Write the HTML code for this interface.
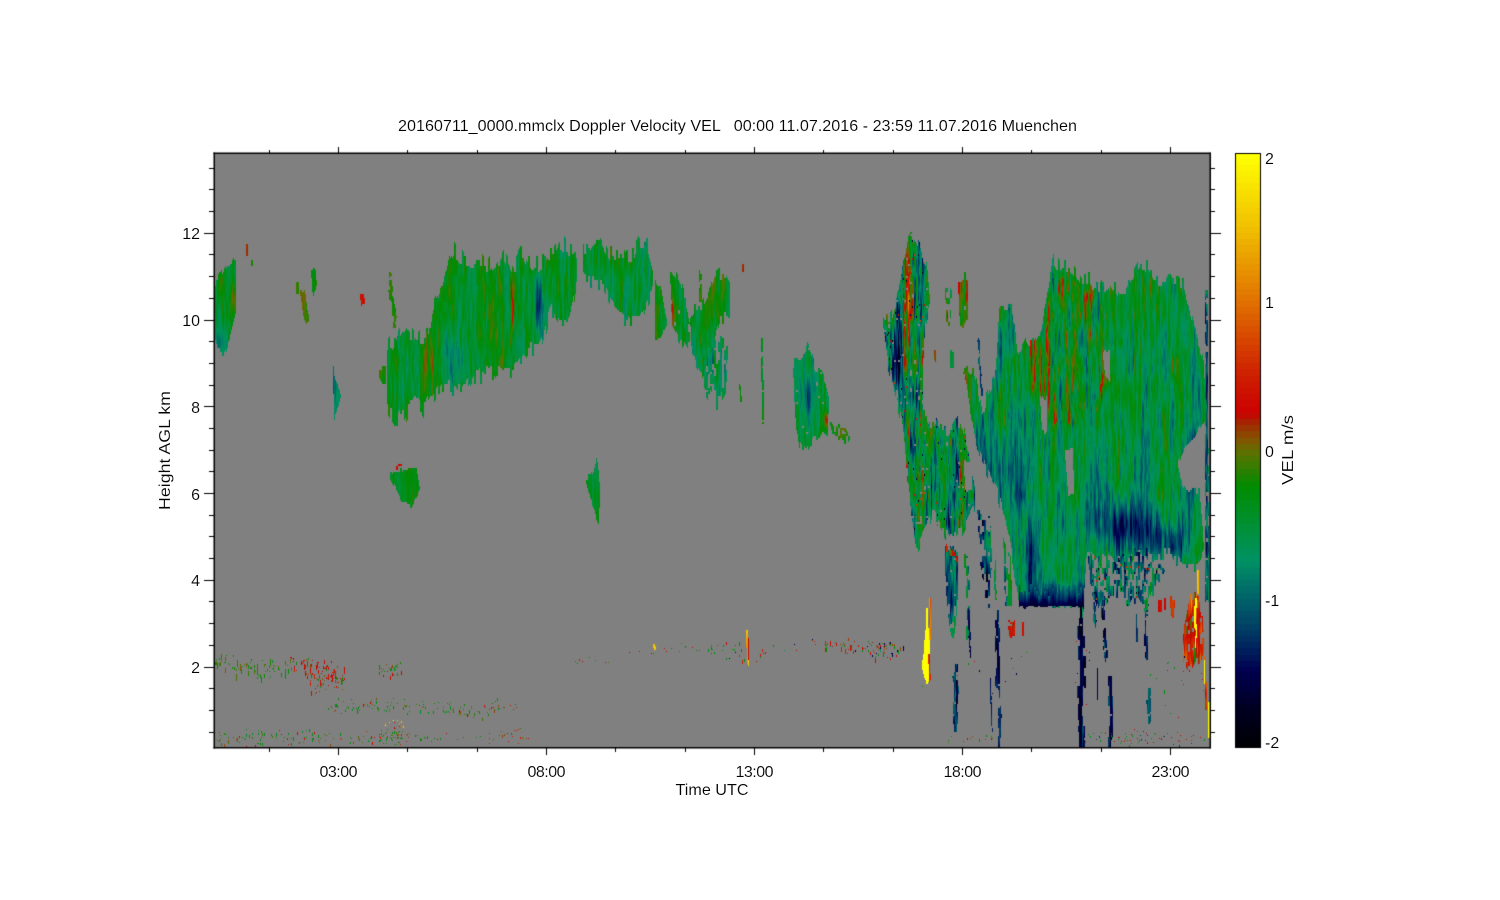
<!DOCTYPE html>
<html><head><meta charset="utf-8"><title>Doppler Velocity</title>
<style>
html,body{margin:0;padding:0;background:#fff;width:1500px;height:900px;overflow:hidden}
canvas,svg{position:absolute;left:0;top:0}
text{font-family:"Liberation Sans",sans-serif;font-size:16px;fill:#000;stroke:#fff;stroke-width:.12px}
</style></head><body>
<canvas id="c" width="1500" height="900"></canvas>
<svg width="1500" height="900" viewBox="0 0 1500 900">
<text x="398" y="131" textLength="679" lengthAdjust="spacingAndGlyphs" xml:space="preserve">20160711_0000.mmclx Doppler Velocity VEL   00:00 11.07.2016 - 23:59 11.07.2016 Muenchen</text>
<g text-anchor="end">
<text x="200" y="239">12</text><text x="200" y="326">10</text><text x="200" y="413">8</text><text x="200" y="500">6</text><text x="200" y="586">4</text><text x="200" y="673">2</text>
</g>
<g text-anchor="middle">
<text x="338.5" y="777" textLength="38">03:00</text><text x="546.5" y="777" textLength="38">08:00</text><text x="754.5" y="777" textLength="38">13:00</text><text x="962.5" y="777" textLength="38">18:00</text><text x="1170.5" y="777" textLength="38">23:00</text>
<text x="712" y="795" textLength="73" lengthAdjust="spacingAndGlyphs">Time UTC</text>
</g>
<text transform="translate(170,510) rotate(-90)" textLength="119" lengthAdjust="spacingAndGlyphs">Height AGL km</text>
<text transform="translate(1293,485) rotate(-90)" textLength="70" lengthAdjust="spacingAndGlyphs">VEL m/s</text>
<text x="1265" y="164">2</text><text x="1265" y="308">1</text><text x="1265" y="457">0</text><text x="1265" y="606">-1</text><text x="1265" y="748">-2</text>
</svg>
<script>
(function(){
var cv=document.getElementById('c'),g=cv.getContext('2d');
g.fillStyle='#fff';g.fillRect(0,0,1500,900);
var stops=[[-2,0,0,5],[-1.75,0,0,35],[-1.5,0,0,80],[-1.25,0,55,100],[-1,0,100,105],[-.75,0,145,100],[-.6,0,145,70],[-.25,0,140,0],[0,100,110,0],[.07,130,85,0],[.2,170,30,0],[.25,204,0,0],[.5,205,30,0],[.75,215,70,0],[1,224,112,0],[1.5,240,190,0],[2,255,255,0]];
function col(v){
  v=Math.max(-2,Math.min(2,v));
  v=Math.round((v+2)/4*95)/95*4-2;
  for(var i=1;i<stops.length;i++){if(v<=stops[i][0]){var a=stops[i-1],b=stops[i],t=(v-a[0])/(b[0]-a[0]);
    return 'rgb('+Math.round(a[1]+(b[1]-a[1])*t)+','+Math.round(a[2]+(b[2]-a[2])*t)+','+Math.round(a[3]+(b[3]-a[3])*t)+')';}}
  return '#ff0';
}
var s=12345;function R(){s=(s+0x6D2B79F5)|0;var t=Math.imul(s^(s>>>15),1|s);t=(t+Math.imul(t^(t>>>7),61|t))^t;return((t^(t>>>14))>>>0)/4294967296;}
function H(i,j,k){var h=Math.imul(i,374761393)+Math.imul(j,668265263)+Math.imul(k,1274126177);h=Math.imul(h^(h>>>13),1274126177);return((h^(h>>>16))>>>0)/4294967296;}
function vn(x,y,sx,sy,k){var i=Math.floor(x/sx),f=y/sy,j=Math.floor(f);f-=j;f=f*f*(3-2*f);return H(i,j,k)*(1-f)+H(i,j+1,k)*f;}
var G=[
[218,340,4,15,-.6],[233,300,3,15,.3],
[452,360,9,28,-.55],[538,305,4,26,-.85],[512,300,2,32,.55],[431,360,2,20,.5],[425,355,5,25,.15],[490,300,8,28,.2],[520,300,3,25,.1],
[808,400,3,28,-.9],[826,420,3,10,.7],
[710,290,8,25,.25],[672,310,2,20,.3],
[1032,560,10,45,-.75],[1120,525,38,24,-.8],[1060,595,28,12,-.6],[1170,540,22,18,-.55],[1190,470,6,45,-.7],[1012,470,20,60,-.45],[1135,480,10,40,-.3],[1095,490,8,30,-.3],
[1062,290,6,25,.45],[1047,345,4,50,.5],[1092,300,4,25,.4],[1105,335,3,40,.35],[1182,300,4,20,.3],[1105,378,5,12,.5],[1150,285,6,14,.2],
[908,285,4,40,1.0],[922,425,4,18,.8],[895,375,6,40,-.7],[965,385,3,30,.7],[978,440,6,35,-.5],
[1198,400,4,30,-.4],[1120,420,18,30,-.1]];
function field(P,x,y){
  var v=P.v;
  for(var i=0;i<G.length;i++){var a=G[i],dx=(x-a[0])/a[2],dy=(y-a[1])/a[3],d=dx*dx+dy*dy;if(d<9)v+=a[4]*Math.exp(-d);}
  var A=P.amp;
  v+=A*(2*vn(x,y,2,26,1)-1)+.6*A*(2*vn(x,y,1,9,2)-1)+.8*A*(2*vn(x,y,7,60,3)-1);
  if(P.spk&&R()<P.spk)v=R()<.5?.3+R()*.5:-1.4-R()*.5;
  return v;
}
g.fillStyle='#808080';g.fillRect(214,153,996,595);
g.save();g.beginPath();g.rect(214,153,996,595);g.clip();
var pid=0;
function lf(x,k,n){var f=x/9,i=Math.floor(f);f-=i;return H(i,n,k)*(1-f)+H(i+1,n,k)*f-.5;}
function poly(pts,o){
  pid++;var me=pid;
  var P={v:o.v===undefined?-.5:o.v,amp:o.amp===undefined?.22:o.amp,j:o.j===undefined?6:o.j,hole:o.hole||0,spk:o.spk||0,mask:o.mask};
  var mn=1e9,mx=-1e9,i;for(i=0;i<pts.length;i++){mn=Math.min(mn,pts[i][0]);mx=Math.max(mx,pts[i][0]);}
  for(var x=Math.floor(mn);x<=mx;x++){
    var X=x+.5,c=[];
    for(i=0;i<pts.length;i++){var a=pts[i],b=pts[(i+1)%pts.length];
      if((a[0]<=X&&b[0]>X)||(b[0]<=X&&a[0]>X))c.push(a[1]+(X-a[0])/(b[0]-a[0])*(b[1]-a[1]));}
    c.sort(function(p,q){return p-q});
    for(i=0;i+1<c.length;i+=2){
      var k=Math.floor(x/2),r1=H(k,i+me*7,7),r2=H(k,i+me*7,8);
      var y0=c[i]+(.4-r1*r1*1.3)*P.j+lf(x,21,me)*P.j*1.2,y1=c[i+1]-(.4-r2*r2*1.3)*P.j+lf(x,22,me)*P.j*1.2;
      y0=Math.floor(y0/2)*2;
      for(var y=y0;y<y1;y+=2){
        if(P.mask){g.fillStyle='#808080';g.fillRect(x,y,1,2);continue;}
        if(P.hole&&vn(x,y,2,6,5)<P.hole)continue;
        g.fillStyle=col(field(P,x,y));g.fillRect(x,y,1,2);
      }
    }
  }
}
function st(x1,y1,x2,y2,w,o){poly([[x1-w/2,y1],[x1+w/2,y1],[x2+w/2,y2],[x2-w/2,y2]],o);}
function wob(x1,y1,x2,y2,w,o){
  var n=Math.max(1,Math.round((y2-y1)/10));
  for(var i=0;i<n;i++){var t=i/n,t2=(i+1)/n,d=(R()-.5)*w*.7,ww=w*(.55+R()*.75);
    if(R()<.1)continue;
    st(x1+(x2-x1)*t+d,y1+(y2-y1)*t,x1+(x2-x1)*t2+d,y1+(y2-y1)*t2,ww,o);}
}
/* left & small clouds */
poly([[214,290],[220,280],[228,268],[236,266],[236,310],[230,335],[224,352],[218,345],[214,330]],{v:-.45,j:8});
poly([[300,292],[305,292],[309,320],[305,322]],{v:-.05,j:3,amp:.1});
poly([[296,283],[299,283],[299,294],[296,294]],{v:-.25,j:2,amp:.1,hole:.2});
poly([[311,272],[315,267],[317,285],[313,298]],{v:-.3,j:3,amp:.1});
poly([[360,294],[364,297],[365,303],[361,304]],{v:.35,j:1,amp:.05});
st(247,244,247,256,1.5,{v:.15,j:0,amp:.05});st(252,260,252,266,1.5,{v:-.15,j:0,amp:.05});
/* thin olive strand */
wob(389,272,395,328,3,{v:-.08,j:2,amp:.1,hole:.2});
/* main cloud A */
poly([[387,352],[400,332],[417,335],[428,340],[433,312],[440,295],[453,257],[470,263],[497,270],[510,262],[530,263],[553,263],[560,250],[577,255],[577,280],[570,317],[560,317],[553,303],[546,320],[535,350],[510,368],[497,367],[470,375],[453,387],[433,397],[417,400],[403,412],[387,400]],{v:-.42,j:14});
poly([[379,372],[386,368],[386,385],[381,382]],{v:-.3,j:3});
/* cloud B, C */
poly([[583,250],[600,242],[610,260],[635,255],[637,243],[647,250],[653,273],[653,290],[643,313],[620,315],[607,293],[597,275],[583,270]],{v:-.5,j:11});
poly([[655,280],[661,285],[667,325],[660,340],[655,340]],{v:-.4,j:5});
poly([[670,273],[680,280],[690,320],[690,345],[680,347],[672,330]],{v:-.45,j:10,hole:.1});
poly([[690,320],[703,303],[717,270],[730,277],[730,307],[720,320],[710,357],[700,373],[692,360]],{v:-.45,j:10});
poly([[700,360],[716,340],[728,345],[727,385],[715,400],[705,385]],{v:-.65,j:12,hole:.32});
st(701,272,701,300,3,{v:-.2,j:3,hole:.15});
st(743,265,743,272,2.5,{v:.2,j:1,amp:.1});
st(762,337,763,420,2,{v:-.35,j:3,hole:.18});st(740,385,741,400,1.5,{v:-.1,j:2,hole:.1});
/* small clouds */
poly([[793,370],[800,365],[808,342],[815,370],[822,375],[829,400],[828,430],[815,437],[806,448],[800,440],[795,420]],{v:-.55,j:9,hole:.05});
poly([[830,424],[845,428],[850,436],[845,441],[832,435]],{v:-.2,j:4,hole:.25});
poly([[390,474],[402,472],[416,468],[420,490],[412,505],[402,503]],{v:-.38,j:3,amp:.12});
st(400,467,415,467,8,{v:.35,j:3,amp:.1,hole:.25});
poly([[586,482],[594,470],[597,455],[600,490],[599,525],[592,500]],{v:-.45,j:3,amp:.14});
poly([[333,365],[335,380],[341,395],[336,410],[334,425]],{v:-.9,j:3,amp:.15});
/* arc */
poly([[883,320],[890,318],[897,297],[903,262],[909,237],[920,245],[927,265],[930,300],[925,320],[923,370],[923,400],[928,425],[945,430],[960,418],[965,440],[975,490],[975,510],[960,530],[950,533],[940,515],[932,505],[925,525],[917,545],[912,520],[908,480],[903,423],[895,387],[887,353]],{v:-.62,amp:.55,j:10,hole:.07,spk:.015});
poly([[958,282],[968,282],[968,320],[960,325]],{v:.1,amp:.3,j:6,hole:.1});
poly([[945,290],[952,290],[951,325],[946,325]],{v:.0,amp:.4,j:4,hole:.45});
st(952,351,952,367,4,{v:-.55,j:2});
wob(978,340,982,395,2,{v:-1.3,amp:.3,j:2,hole:.12});
st(935,350,935,360,2,{v:.1,j:2,hole:.1});
/* main big region */
poly([[963,363],[975,370],[982,410],[995,378],[1000,310],[1012,310],[1018,360],[1025,345],[1040,340],[1043,320],[1053,267],[1070,273],[1097,287],[1120,290],[1143,272],[1160,287],[1170,277],[1185,290],[1192,323],[1203,357],[1207,397],[1205,440],[1200,500],[1203,540],[1200,563],[1185,558],[1163,550],[1130,555],[1087,553],[1083,607],[1020,607],[1010,540],[997,490],[990,470],[975,440]],{v:-.55,amp:.27,j:11});
/* streaky upper-left overlay */
poly([[1043,330],[1053,272],[1070,278],[1097,292],[1110,330],[1100,400],[1070,425],[1040,425],[1025,385],[1030,350]],{v:-.42,amp:.45,j:8,hole:.02});
poly([[1000,315],[1012,315],[1018,365],[1012,430],[1000,430],[996,385]],{v:-.6,amp:.4,j:8,hole:.05});
/* flat base: clean below, soft dark ramp above */
g.fillStyle='#808080';g.fillRect(1015,608,66,16);
for(var xx=1019;xx<1084;xx++){
  var by=606+(H(Math.floor(xx/3),1,9)>.7?2:0),lh=10+Math.floor(H(Math.floor(xx/2),2,9)*14);
  for(var yy=by-lh;yy<by;yy+=2){var tt=(yy-(by-lh))/lh;
    g.fillStyle=col(-1.05-.65*tt+.25*(vn(xx,yy,2,12,4)-.5));g.fillRect(xx,yy,1,2);}
}
/* holes */
poly([[1205,420],[1205,502],[1190,500],[1182,480],[1178,465],[1185,448],[1198,432]],{mask:1,j:4});
poly([[1103,353],[1110,353],[1110,380],[1105,375]],{mask:1,j:2});
poly([[1040,397],[1047,400],[1047,430],[1042,428]],{mask:1,j:3});
poly([[1065,450],[1073,450],[1074,493],[1068,493]],{mask:1,j:2});
poly([[964,463],[973,463],[972,492],[965,490]],{mask:1,j:3});
poly([[1037,300],[1043,320],[1040,335],[1030,340]],{mask:1,j:2});
/* right edge stream */
poly([[1205,290],[1208,290],[1209,600],[1205,600]],{v:-.85,amp:.5,j:3,hole:.25});
poly([[1172,480],[1200,495],[1204,545],[1195,565],[1172,550]],{v:-.5,amp:.3,j:6,hole:.1});
/* hanging dark streams */
var dk={v:-1.5,amp:.22,j:2,hole:.12};
poly([[945,550],[958,552],[958,590],[955,633],[951,633],[946,590]],{v:-.85,amp:.4,j:5,hole:.12});
st(948,548,956,558,5,{v:.35,amp:.3,j:3,hole:.35});
wob(967,547,968,637,3,{v:-.7,amp:.4,j:3,hole:.15});
poly([[977,510],[990,515],[992,560],[990,603],[986,603],[981,570]],{v:-1.1,amp:.5,j:6,hole:.4});
wob(997,610,1000,747,3.5,dk);wob(995,560,996,610,2,{v:-.7,amp:.4,j:2,hole:.2});
poly([[1003,540],[1011,560],[1012,607],[1005,607]],{v:-.6,amp:.4,j:4,hole:.4});
wob(1081,607,1082,747,5.5,{v:-1.45,amp:.3,j:2,hole:.03});
st(1081,607,1081,747,1.5,{v:-1.6,amp:.15,j:1,hole:.02});
wob(1094,603,1096,630,2.5,{v:-1.2,amp:.5,j:2,hole:.25});
wob(1102,587,1106,660,3.5,{v:-1.2,amp:.5,j:3,hole:.28});
wob(1110,677,1111,747,4,{v:-1.5,amp:.3,j:2,hole:.08});
wob(1146,603,1147,657,3,{v:-1.4,amp:.4,j:2,hole:.25});
wob(1137,617,1137,640,2,{v:-1.2,amp:.3,j:2,hole:.2});
wob(1149,690,1150,722,3.5,{v:-1.2,amp:.3,j:2,hole:.1});
wob(955,663,956,730,4.5,{v:-1.4,amp:.45,j:3,hole:.25});
wob(969,610,970,657,2,{v:-1.4,amp:.2,j:2,hole:.2});
wob(990,680,992,730,1.5,dk);wob(1098,668,1098,700,1.5,dk);
poly([[1087,556],[1150,552],[1165,570],[1147,603],[1120,600],[1095,603]],{v:-.85,amp:.45,j:9,hole:.45,spk:.06});
/* red & yellow patches */
poly([[1183,630],[1190,598],[1197,592],[1203,620],[1205,660],[1190,662],[1183,655]],{v:.6,amp:.5,j:8,hole:.15});
wob(1195,597,1196,647,2,{v:2,amp:0,j:2});
st(1198,570,1198,593,1.5,{v:1.5,amp:.2,j:1});
st(1204.5,660,1204.5,682,1.5,{v:1.9,amp:0,j:1});
st(1209,703,1209,737,2,{v:2,amp:0,j:1});
st(1206,682,1206,710,1.5,{v:.5,amp:.3,j:1});
poly([[925,630],[930,630],[930,660],[929,682],[925,678],[922,665],[924,650]],{v:2.2,amp:.05,j:3});
st(927,610,927,632,1.5,{v:2,amp:0,j:1});st(930,600,930,640,1.5,{v:1.3,amp:.4,j:1});
st(929,655,930,680,1.5,{v:.5,amp:.2,j:2});
poly([[1008,622],[1015,622],[1015,635],[1009,637]],{v:.4,amp:.2,j:2,hole:.15});
st(1023,625,1023,635,1.5,{v:.35,amp:.1,j:1});
poly([[1170,601],[1175,601],[1174,615],[1171,617]],{v:.5,amp:.15,j:3});
poly([[1158,602],[1162,602],[1162,610],[1158,610]],{v:.35,amp:.15,j:2});
st(1165,600,1165,610,1.5,{v:.4,amp:.1,j:2});
/* speckle */
function speck(x1,x2,yf,th,n,pal,hm){
  for(var i=0;i<n;i++){var x=Math.floor(x1+R()*(x2-x1)),y=yf(x)+(R()+R()-1)*th*1.3;
    g.fillStyle=col(pal[Math.floor(R()*pal.length)]);g.fillRect(x,Math.floor(y),1,1+Math.floor(R()*R()*(hm||6)));}
}
var gp=[-.3,-.25,-.35,-.2,-.1,-.45],rp=[.3,.25,.1,.05,-.25,.5],mx=[-.3,-.25,.3,.1,-.7,.5,-1.5];
function lerp(p){return function(x){for(var i=1;i<p.length;i++)if(x<=p[i][0]){var t=(x-p[i-1][0])/(p[i][0]-p[i-1][0]);return p[i-1][1]+t*(p[i][1]-p[i-1][1]);}return p[p.length-1][1];};}
speck(215,292,lerp([[215,660],[260,670],[292,665]]),8,90,gp.concat([-.05,.05]),8);
speck(290,345,lerp([[290,664],[315,670],[345,676]]),10,90,rp.concat([.3,.3]),8);
speck(310,345,function(){return 685},9,25,rp,6);
speck(378,402,function(){return 670},7,30,gp.concat(rp),6);
speck(328,500,lerp([[328,708],[400,705],[430,708],[470,714],[500,705]]),7,120,gp.concat([.3,.05]),4);
speck(215,330,function(){return 738},7,80,gp.concat([.3,.1]),4);
speck(330,520,function(){return 738},7,70,gp.concat([.3,.1,.5]),3);
speck(380,410,function(){return 738},8,35,gp.concat(rp),3);
speck(385,405,function(){return 726},6,12,[1.5,1.9,1.2,.3],3);
speck(500,530,function(){return 735},6,12,rp,2);speck(480,520,function(){return 707},4,10,rp,3);
speck(530,700,lerp([[530,665],[700,648]]),6,22,gp.concat(rp),2);
speck(700,820,lerp([[700,648],[760,655],[820,642]]),8,38,mx,5);
speck(820,905,lerp([[820,645],[905,650]]),7,60,mx,6);
speck(870,895,function(){return 650},8,30,mx,6);
st(747,632,748,662,2,{v:1.7,amp:.3,j:3});st(749,640,749,658,1,{v:.3,j:1,amp:.1});
st(654,645,655,650,2,{v:1.5,amp:.1,j:0});
speck(945,1005,function(){return 738},4,14,gp.concat(rp),2);
speck(1085,1205,function(){return 738},7,70,[-.3,-.25,.3,.25,.1,-1.2],2);
speck(920,1205,function(){return 670},40,24,[-.3,.3,-1.5],3);
speck(1140,1205,function(){return 690},26,12,[-.3,.3],4);
g.restore();
/* axes */
g.fillStyle='#000';
g.fillRect(213.5,152.5,997,1.5);g.fillRect(213.5,747,997,1.5);g.fillRect(213.5,152.5,1.5,596);g.fillRect(1209.5,152.5,1.5,596);
for(var i=0;i<14;i++){var x=Math.round(269.17+69.33*i-.5),M=i%3==1;
  g.fillRect(x,M?147:150,1,M?6:3);g.fillRect(x,748,1,M?7:4);}
for(var k=1;k<=27;k++){var km=k*.5,y=Math.round(667-(km-2)*43.37-.5),M2=k%4==0;
  g.fillRect(M2?204:209,y,M2?10:5,1);g.fillRect(1211,y,M2?10:4,1);}
/* colour bar */
for(var q=0;q<96;q++){var v=2-4*(q+.5)/96;g.fillStyle=col(v);g.fillRect(1236,Math.floor(153+q*595/96),25,7);}
g.fillStyle='#000';g.fillRect(1235,153,1,595);g.fillRect(1260,153,1,595);g.fillRect(1235,153,26,1);g.fillRect(1235,747,26,1);
})();
</script>
</body></html>
